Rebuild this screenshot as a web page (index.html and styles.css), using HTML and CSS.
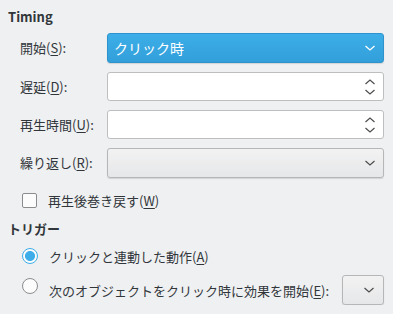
FILE: index.html
```html
<!DOCTYPE html>
<html lang="ja">
<head>
  <meta charset="UTF-8">
  <title>Timing</title>
  <link rel="stylesheet" href="styles.css">
</head>
<body>

<div class="panel">
  <h3 class="titulo">Timing</h3>

  <div class="grade">
    <label class="rotulo">開始(<u>S</u>):</label>
    <div class="combo ativo">
      <span>クリック時</span>
      <svg class="seta" width="12" height="8" viewBox="0 0 12 8"><path d="M1.5 2 L6 6 L10.5 2" fill="none" stroke="#fff" stroke-width="1.3"/></svg>
    </div>

    <label class="rotulo">遅延(<u>D</u>):</label>
    <div class="spin">
      <svg class="setas" width="12" height="18" viewBox="0 0 12 18"><path d="M1.5 6 L6 2 L10.5 6 M1.5 12 L6 16 L10.5 12" fill="none" stroke="#4d4d4d" stroke-width="1.2"/></svg>
    </div>

    <label class="rotulo">再生時間(<u>U</u>):</label>
    <div class="spin">
      <svg class="setas" width="12" height="18" viewBox="0 0 12 18"><path d="M1.5 6 L6 2 L10.5 6 M1.5 12 L6 16 L10.5 12" fill="none" stroke="#4d4d4d" stroke-width="1.2"/></svg>
    </div>

    <label class="rotulo">繰り返し(<u>R</u>):</label>
    <div class="combo">
      <span></span>
      <svg class="seta" width="12" height="8" viewBox="0 0 12 8"><path d="M1.5 2 L6 6 L10.5 2" fill="none" stroke="#4d4d4d" stroke-width="1.2"/></svg>
    </div>
  </div>

  <div class="opcao check">
    <span class="caixa"></span>
    <span>再生後巻き戻す(<u>W</u>)</span>
  </div>

  <h3 class="titulo trigger">トリガー</h3>

  <div class="opcao radio-linha">
    <span class="radio marcado"></span>
    <span>クリックと連動した動作(<u>A</u>)</span>
  </div>

  <div class="opcao radio-linha ultima">
    <span class="radio"></span>
    <span class="texto-longo">次のオブジェクトをクリック時に効果を開始(<u>E</u>):</span>
    <div class="combo pequeno">
      <span></span>
      <svg class="seta" width="12" height="8" viewBox="0 0 12 8"><path d="M1.5 2 L6 6 L10.5 2" fill="none" stroke="#4d4d4d" stroke-width="1.2"/></svg>
    </div>
  </div>
</div>

</body>
</html>
```

FILE: styles.css
```css
body {
  margin: 0;
  background: #eff0f1;
  color: #31363b;
  font-family: "Noto Sans CJK JP", "Noto Sans", sans-serif;
  font-size: 13px;
}

.panel {
  padding: 7px 9px 0 8px;
}

.titulo {
  margin: 0;
  font-size: 13px;
  font-weight: bold;
  height: 20px;
  line-height: 20px;
}

.grade {
  display: grid;
  grid-template-columns: 87px 1fr;
  grid-template-rows: 30px 29px 29px 30px;
  row-gap: 9px;
  margin-top: 6px;
  padding-left: 12px;
  align-items: center;
}

u {
  text-underline-offset: 2px;
}

.rotulo {
  line-height: 20px;
}

.combo, .spin {
  box-sizing: border-box;
  height: 100%;
  display: flex;
  align-items: center;
  justify-content: space-between;
  padding: 0 7px 0 6px;
  border-radius: 3px;
}

.combo {
  border: 1px solid #b4b6b8;
  background: linear-gradient(#f2f2f3, #e6e7e8);
  box-shadow: 0 1px 1px rgba(0, 0, 0, 0.12);
}

.combo.ativo {
  border-color: #2e93cc;
  background: linear-gradient(#3daee9, #329fd9);
  color: #fff;
  font-size: 14px;
}

.spin {
  border: 1px solid #bcbebf;
  background: #fff;
  justify-content: flex-end;
}

.opcao {
  display: flex;
  align-items: center;
  gap: 11px;
  padding-left: 14px;
}

.check {
  margin-top: 15px;
  height: 14px;
}

.caixa {
  box-sizing: border-box;
  width: 15px;
  height: 15px;
  border: 1px solid #8a8c8e;
  border-radius: 2px;
  background: #fcfcfc;
}

.trigger {
  margin-top: 12px;
}

.radio-linha {
  margin-top: 2px;
  height: 30px;
}

.radio-linha.ultima {
  margin-top: 4px;
}

.radio {
  box-sizing: border-box;
  width: 16px;
  height: 16px;
  border: 1px solid #8a8c8e;
  border-radius: 50%;
  background: #fcfcfc;
  flex: none;
}

.ultima .radio {
  align-self: flex-start;
  margin-top: 3px;
}

.radio.marcado {
  border: 1.5px solid #3daee9;
  background: radial-gradient(circle, #3daee9 0 4.6px, #fcfcfc 5.4px);
}

.texto-longo {
  flex: 1;
}

.combo.pequeno {
  width: 42px;
  height: 30px;
  justify-content: flex-end;
  padding-right: 8px;
}
```
